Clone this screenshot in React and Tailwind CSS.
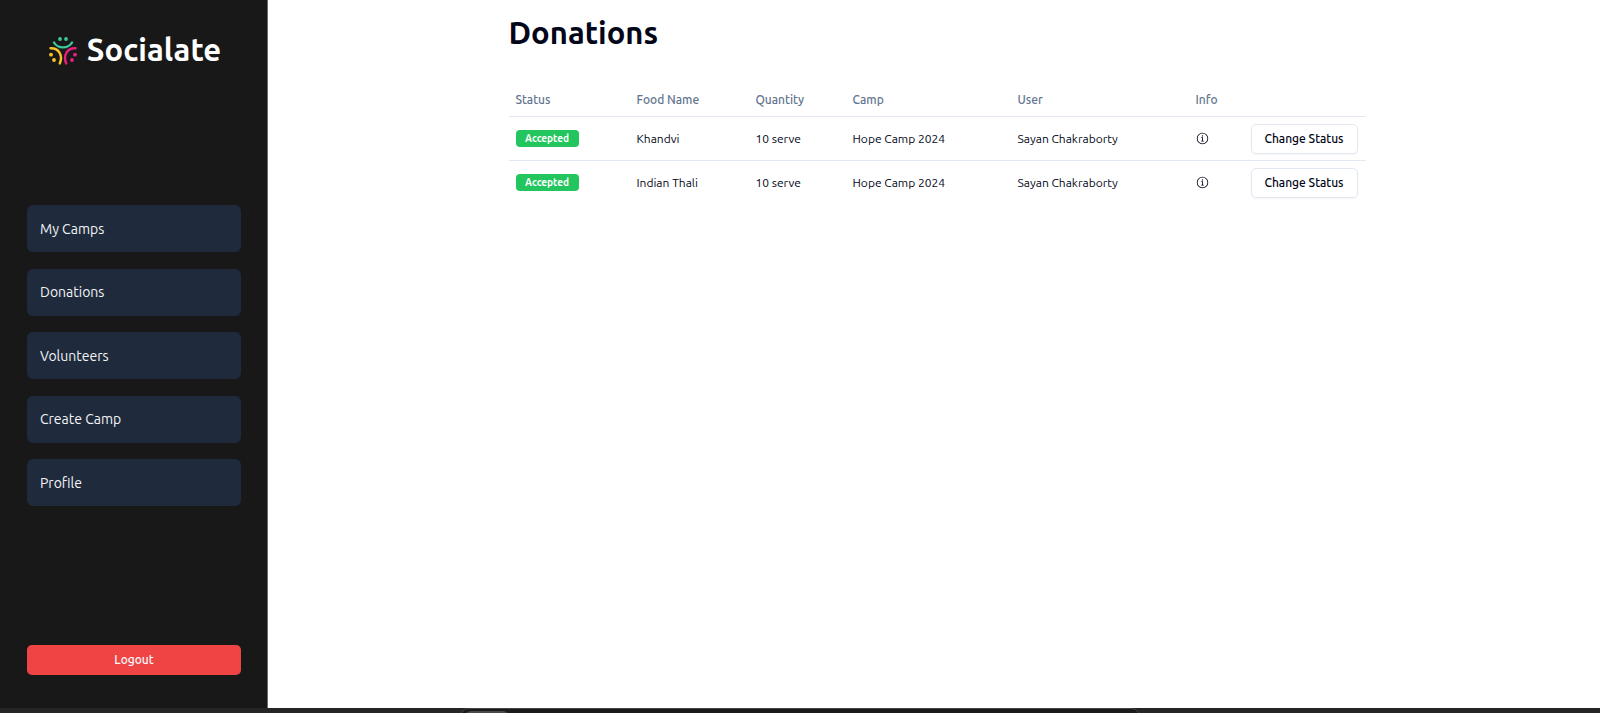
const NAV_ITEMS = ["My Camps", "Donations", "Volunteers", "Create Camp", "Profile"];

const DONATIONS = [
  { id: 1, status: "Accepted", food: "Khandvi", quantity: "10 serve", camp: "Hope Camp 2024", user: "Sayan Chakraborty" },
  { id: 2, status: "Accepted", food: "Indian Thali", quantity: "10 serve", camp: "Hope Camp 2024", user: "Sayan Chakraborty" },
];

function Logo() {
  return (
    <svg viewBox="0 0 28 28" className="size-7" fill="none" strokeWidth="2.4" strokeLinecap="round" aria-hidden="true">
      <g stroke="#3cc99a">
        <path d="M5 5.500c2 3.400 5.200 4.900 9 4.900s7-1.500 9-4.900" />
        <circle cx="11" cy="2" r="1.900" fill="#3cc99a" stroke="none" />
        <circle cx="17" cy="2" r="1.900" fill="#3cc99a" stroke="none" />
      </g>
      <g stroke="#f7c325">
        <path d="M1.500 11.200c4-.2 7.200 1.300 9 4.400s2 7 .3 10.900" />
        <circle cx="2" cy="17.700" r="1.900" fill="#f7c325" stroke="none" />
        <circle cx="5" cy="23" r="1.900" fill="#f7c325" stroke="none" />
      </g>
      <g stroke="#ea1f80">
        <path d="M26.500 11.200c-4-.2-7.200 1.300-9 4.400s-2 7-.3 10.900" />
        <circle cx="26" cy="17.700" r="1.900" fill="#ea1f80" stroke="none" />
        <circle cx="23" cy="23" r="1.900" fill="#ea1f80" stroke="none" />
      </g>
    </svg>
  );
}

function InfoIcon() {
  return (
    <svg viewBox="0 0 15 15" className="size-[13px]" fill="currentColor" aria-hidden="true">
      <path
        fillRule="evenodd"
        clipRule="evenodd"
        d="M7.500.877a6.623 6.623 0 1 0 0 13.246A6.623 6.623 0 0 0 7.500.877ZM1.827 7.500a5.673 5.673 0 1 1 11.346 0 5.673 5.673 0 0 1-11.346 0ZM8.250 4.500a.75.75 0 1 1-1.500 0 .75.75 0 0 1 1.500 0ZM6 6h2v4h1v1H6v-1h1V7H6V6Z"
      />
    </svg>
  );
}

function Sidebar() {
  return (
    <aside className="flex w-[16.75%] shrink-0 flex-col justify-between border-r border-[#6b6b6b] bg-[#181818] pt-[35px] pr-[26px] pb-[33px] pl-[27px]">
      <div className="flex h-[31px] items-center justify-center gap-[10px] pl-[2px]">
        <Logo />
        <span className="text-[31px] font-bold text-white">Socialate</span>
      </div>
      <nav className="flex h-[301px] flex-col justify-between">
        {NAV_ITEMS.map((item) => (
          <a key={item} href="#" className="flex h-[47px] items-center rounded-md bg-[#1f2a3c] px-[13px] text-sm text-gray-100">
            {item}
          </a>
        ))}
      </nav>
      <button type="button" className="h-[30px] rounded-[5px] bg-[#ef4444] text-xs font-medium text-slate-50">
        Logout
      </button>
    </aside>
  );
}

function DonationsTable() {
  return (
    <table className="w-full table-fixed text-left text-xs">
      <colgroup>
        <col className="w-[121px]" />
        <col className="w-[119px]" />
        <col className="w-[97px]" />
        <col className="w-[165px]" />
        <col className="w-[178px]" />
        <col className="w-[55px]" />
        <col />
      </colgroup>
      <thead>
        <tr className="h-9 border-b border-slate-200 text-slate-500">
          <th className="px-[7px] pt-1 font-medium">Status</th>
          <th className="px-[7px] pt-1 font-medium">Food Name</th>
          <th className="px-[7px] pt-1 font-medium">Quantity</th>
          <th className="px-[7px] pt-1 font-medium">Camp</th>
          <th className="px-[7px] pt-1 font-medium">User</th>
          <th className="px-[7px] pt-1 font-medium">Info</th>
          <td />
        </tr>
      </thead>
      <tbody>
        {DONATIONS.map((row) => (
          <tr key={row.id} className="h-11 border-b border-slate-200 text-slate-950 last:border-0">
            <td className="px-[7px] pt-px">
              <span className="flex h-[17px] w-[63px] items-center justify-center rounded-[4px] bg-[#22c55e] text-[10px] font-bold text-white">
                {row.status}
              </span>
            </td>
            <td className="px-[7px] pt-px">{row.food}</td>
            <td className="px-[7px] pt-px">{row.quantity}</td>
            <td className="px-[7px] pt-px">{row.camp}</td>
            <td className="px-[7px] pt-px">{row.user}</td>
            <td className="px-[7px] pt-px">
              <button type="button" aria-label="Donation info" className="flex">
                <InfoIcon />
              </button>
            </td>
            <td className="pt-px pr-[7px] pl-[7px]">
              <button
                type="button"
                className="flex h-[30px] w-[107px] items-center justify-center rounded-[5px] border border-slate-200 whitespace-nowrap font-medium shadow-xs"
              >
                Change Status
              </button>
            </td>
          </tr>
        ))}
      </tbody>
    </table>
  );
}

export default function App() {
  return (
    <div className="flex h-screen flex-col bg-white font-['Ubuntu','Noto_Sans',sans-serif]">
      <div className="flex min-h-0 flex-1">
        <Sidebar />
        <main className="flex flex-1 justify-center pl-[6px]">
          <div className="w-full max-w-[857px]">
            <h1 className="mt-[15px] mb-[29px] text-[31px] leading-9 font-bold text-slate-950">Donations</h1>
            <DonationsTable />
          </div>
        </main>
      </div>
      <footer className="flex h-[5px] shrink-0 justify-center overflow-hidden bg-[#252525]">
        <div className="h-4 w-[42.5%] rounded-t-lg border border-[#454545] bg-[#1b1b1b]">
          <div className="mx-1 mt-0.5 h-3 w-11 rounded-t-md bg-[#4a4a4a]" />
        </div>
      </footer>
    </div>
  );
}
